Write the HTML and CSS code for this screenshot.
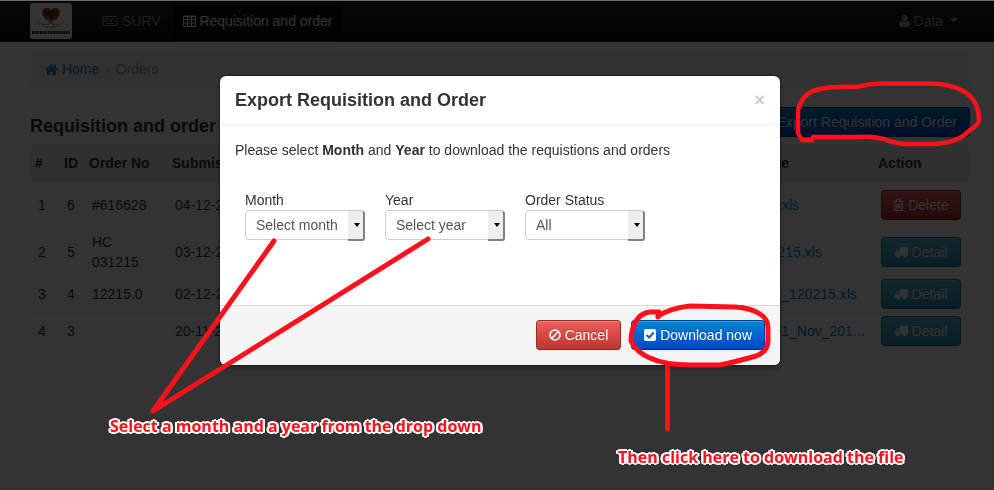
FILE: index.html
```html
<!DOCTYPE html>
<html lang="en">
<head>
<meta charset="utf-8">
<title>Requisition and order</title>
<link rel="stylesheet" href="styles.css">
</head>
<body>
<header class="navbar">
  <a class="brand" href="#" aria-label="Department of Health">
    <svg width="42" height="36" viewBox="0 0 42 36" aria-hidden="true">
      <rect width="42" height="36" rx="3" fill="#fff"/>
      <path d="M21 18C13 18 10 8 14 5.500Q18 4 21 7Q24 4 28 5.500C32 8 29 18 21 18Z" fill="#a54218"/>
      <path d="M15 7Q18 14 21 16Q24 14 27 7M18 6L21 15L24 6" fill="none" stroke="#521c0a" stroke-width="1.500"/>
      <path d="M17 13L20 14L21 20L24 14L26 13L24 18L20 21Z" fill="#a5732a"/>
      <path d="M7 18Q13 24 20 20Q28 24 35 18M11 22Q21 27 31 22M19 20L17 25M23 20L25 25" fill="none" stroke="#b5aa82" stroke-width="1"/>
      <path d="M2 29.500H40" stroke="#333" stroke-width="3" stroke-dasharray="2 .6"/>
    </svg>
  </a>
  <nav class="nav">
    <a class="nav-link" href="#"><svg class="icon" width="16" height="12" viewBox="0 0 16 12"><path d="M1 1.500H15V10.500H1Z" fill="none" stroke="currentColor"/><path d="M3 4H5M6 4H8M9 4H11M12 4H13M3 6H4M5 6H7M8 6H10M11 6H13M4 8.500H12" stroke="currentColor"/></svg> SURV</a>
    <a class="nav-link active" href="#"><svg class="icon" width="13" height="12" viewBox="0 0 13 12"><path d="M.5 1H12.500V11.500H.5ZM.5 4.500H12.500M.5 8H12.500M4.500 1V11.500M8.500 1V11.500M1 1.500H12" fill="none" stroke="currentColor"/></svg> Requisition and order</a>
  </nav>
  <a class="nav-link user" href="#"><svg class="icon" width="11" height="12" viewBox="0 0 11 12"><circle cx="5.500" cy="3" r="3" fill="currentColor"/><path d="M2.500 5.500Q5.500 8 8.500 5.500Q11 6 11 9.500Q11 12 9 12H2Q0 12 0 9.500Q0 6 2.500 5.500Z" fill="currentColor"/></svg> Data <span class="caret"></span></a>
</header>

<main class="container">
  <nav class="breadcrumb" aria-label="Breadcrumb">
    <a href="#"><svg class="icon" width="13" height="12" viewBox="0 0 13 12"><path d="M6.500 1L0 6.500L1 7.500L6.500 2.800L12 7.500L13 6.500L11 4.800V1.500H9V3.200Z" fill="currentColor"/><path d="M6.500 3.800L2 7.600V12H5.300V8.700H7.700V12H11V7.600Z" fill="currentColor"/></svg> Home</a>
    <span class="divider">»</span>
    <span class="current">Orders</span>
  </nav>
  <div class="heading">
    <h1>Requisition and order</h1>
    <button class="btn primary" type="button">Export Requisition and Order</button>
  </div>
  <table class="orders">
    <colgroup><col class="c-num"><col class="c-id"><col class="c-order"><col class="c-date"><col><col class="c-file"><col class="c-action"></colgroup>
    <thead>
      <tr><th>#</th><th>ID</th><th>Order No</th><th>Submission</th><th></th><th>Name</th><th>Action</th></tr>
    </thead>
    <tbody>
      <tr class="tall"><td>1</td><td>6</td><td>#616628</td><td>04-12-2015</td><td></td><td><a href="#">Site.xls</a></td><td><button class="btn danger" type="button"><svg class="icon" width="11" height="12" viewBox="0 0 11 12"><path d="M.5 2.500H10.500M3.500 2V.7H7.500V2M1.700 3V11.300H9.300V3M4 5V9.500M5.500 5V9.500M7 5V9.500" fill="none" stroke="currentColor" stroke-width="1.200"/></svg> Delete</button></td></tr>
      <tr class="tall"><td>2</td><td>5</td><td>HC 031215</td><td>03-12-2015</td><td></td><td><a href="#">031215.xls</a></td><td><button class="btn info" type="button"><svg class="icon" width="13" height="12" viewBox="0 0 13 12"><use href="#truck"/></svg> Detail</button></td></tr>
      <tr><td>3</td><td>4</td><td>12215.0</td><td>02-12-2015</td><td></td><td><a href="#">Kavi_120215.xls</a></td><td><button class="btn info" type="button"><svg class="icon" width="13" height="12" viewBox="0 0 13 12"><use href="#truck"/></svg> Detail</button></td></tr>
      <tr><td>4</td><td>3</td><td></td><td>20-11-2015</td><td></td><td><a href="#">Mob1_Nov_201...</a></td><td><button class="btn info" type="button"><svg class="icon" width="13" height="12" viewBox="0 0 13 12"><use href="#truck"/></svg> Detail</button></td></tr>
    </tbody>
  </table>
</main>

<div class="backdrop">
  <section class="modal" role="dialog" aria-labelledby="dialog-title">
    <div class="modal-header">
      <h2 id="dialog-title">Export Requisition and Order</h2>
      <button class="close" type="button" aria-label="Close">×</button>
    </div>
    <form class="modal-form">
      <div class="modal-body">
        <p>Please select <b>Month</b> and <b>Year</b> to download the requistions and orders</p>
        <div class="fields">
          <div class="field"><label for="month">Month</label><div class="select"><select id="month"><option>Select month</option></select></div></div>
          <div class="field"><label for="year">Year</label><div class="select"><select id="year"><option>Select year</option></select></div></div>
          <div class="field"><label for="status">Order Status</label><div class="select"><select id="status"><option>All</option></select></div></div>
        </div>
      </div>
      <div class="modal-footer">
        <button class="btn danger" type="button"><svg class="icon" width="12" height="12" viewBox="0 0 12 12"><circle cx="6" cy="6" r="5" fill="none" stroke="currentColor" stroke-width="1.600"/><path d="M2.500 9.500L9.500 2.500" stroke="currentColor" stroke-width="1.600"/></svg> Cancel</button>
        <button class="btn primary" type="button"><svg class="icon" width="12" height="12" viewBox="0 0 12 12"><rect width="12" height="12" rx="2" fill="currentColor"/><path d="M2.500 6L5.200 8.500L9.800 3.500" fill="none" stroke="#0a5fca" stroke-width="2"/></svg> Download now</button>
      </div>
    </form>
  </section>
</div>

<svg class="marks" width="994" height="490" viewBox="0 0 994 490" aria-hidden="true">
  <defs><g id="truck" fill="currentColor" stroke="none"><path fill-rule="evenodd" d="M5 1H13V9.500H5ZM4.500 3V9.500H0V6.500L2.500 3ZM1.200 6.300H3.500V4H2.800Z"/><circle cx="3" cy="9.800" r="1.700"/><circle cx="9.800" cy="9.800" r="1.700"/></g></defs>
  <path d="M274 241L153 411L428 239" stroke-width="5"/>
  <path d="M667.500 364V429" stroke-width="5"/>
  <path d="M813 137L812 140L802 140L798 133V110Q802 94 816 90Q832 86 857 87Q871 83 885 83.500H929Q957 84 970 96Q979 105 979 120Q979 125 970 130Q958 143 934 144H905Q892 143 884 139Q872 136 860 137H813" stroke-width="4.500"/>
  <path d="M658 317L659 312H650Q641 313 636 321Q631 330 631 341Q636 352 650 358Q665 365 690 365H720Q735 362 756 356Q767 352 768 342V328Q768 319 760 314Q751 308 735 307L690 306Q671 308 658 316" stroke-width="5"/>
</svg>
<p class="note note-left">Select a month and a year from the drop down</p>
<p class="note note-right">Then click here to download the file</p>
</body>
</html>
```
FILE: styles.css
```css
* { box-sizing: border-box; }
body {
  margin: 0;
  min-height: 100vh;
  background: #fff;
  color: #333;
  font: 14px/20px "Liberation Sans", Arial, sans-serif;
}
a { color: #08c; text-decoration: none; }
button, select { font: inherit; }
.icon { vertical-align: -1px; }

.navbar {
  display: flex;
  height: 42px;
  padding: 0 24px 0 30px;
  border-bottom: 1px solid #252525;
  background: linear-gradient(#222, #111);
}
.brand { margin: 3px 20px 0 0; height: 36px; }
.nav { display: flex; flex: 1; gap: 2px; }
.nav-link {
  display: block;
  padding: 11px 10px 10px;
  color: #999;
  white-space: nowrap;
}
.nav-link.active { background: #080808; color: #fff; }
.nav-link.user { border-left: 1px solid #111; padding: 11px 12px 10px 20px; }
.caret {
  display: inline-block;
  margin-left: 3px;
  border: 4px solid transparent;
  border-top-color: #999;
  border-bottom: 0;
  vertical-align: 4px;
}

.container { padding: 9px 24px 0 30px; }
.breadcrumb {
  padding: 8px 15px;
  border-radius: 4px;
  background: #f5f5f5;
}
.divider { padding: 0 1px; color: #ccc; font-size: 12px; }
.current { color: #999; }
.heading {
  display: flex;
  align-items: flex-start;
  justify-content: space-between;
  margin-top: 19px;
}
h1, h2 { margin: 0; font-size: 18px; line-height: 20px; font-weight: bold; }
.heading h1 { margin-top: 9px; }

.btn {
  height: 30px;
  padding: 4px 12px;
  border: 1px solid rgba(0, 0, 0, .15);
  border-bottom-color: rgba(0, 0, 0, .25);
  border-radius: 4px;
  color: #fff;
  line-height: 20px;
  white-space: nowrap;
  text-shadow: 0 -1px 0 rgba(0, 0, 0, .25);
  box-shadow: inset 0 1px 0 rgba(255, 255, 255, .2), 0 1px 2px rgba(0, 0, 0, .05);
}
.primary { background: linear-gradient(#08c, #04c) padding-box, #04b; }
.danger { background: linear-gradient(#ee5f5b, #bd362f) padding-box, #b6342e; }
.info { background: linear-gradient(#5bc0de, #2f96b4) padding-box, #2f90ad; }

.orders {
  width: 100%;
  margin-top: 8px;
  border-collapse: collapse;
  table-layout: fixed;
}
.c-num { width: 29px; }
.c-id { width: 25px; }
.c-order { width: 83px; }
.c-date { width: 100px; }
.c-file { width: 127px; }
.c-action { width: 97px; }
th {
  height: 36px;
  padding: 0 5px;
  background: #efefef;
  text-align: left;
  white-space: nowrap;
}
td {
  height: 37px;
  padding: 3px 8px;
  border-top: 1px solid #eee;
  white-space: nowrap;
}
td:nth-child(3) { white-space: normal; }
.tall td { height: 47px; }
.orders .btn { width: 80px; padding: 4px 0; }

.backdrop {
  position: fixed;
  inset: 0;
  padding: 75px 0 0 6px;
  border-top: 1px solid rgba(255, 255, 255, .4);
  background: rgba(0, 0, 0, .8);
}
.modal {
  width: 560px;
  max-width: 100%;
  margin: 0 auto;
  overflow: hidden;
  border-radius: 6px;
  background: #fff;
  box-shadow: 0 0 0 1px rgba(0, 0, 0, .3), 0 3px 7px rgba(0, 0, 0, .3);
}
.modal-header {
  display: flex;
  justify-content: space-between;
  padding: 14px 15px;
  border-bottom: 1px solid #eee;
}
.close {
  padding: 0;
  border: 0;
  background: none;
  color: #ccc;
  font-size: 18px;
  font-weight: bold;
  line-height: 18px;
}
.modal-body { padding: 15px; min-height: 180px; }
.modal-body p { margin: 0 0 30px; }
.fields { display: flex; gap: 20px; padding: 0 10px; }
.field { width: 120px; }
.field label { display: block; }
.select { position: relative; }
.select select {
  display: block;
  width: 100%;
  height: 30px;
  padding: 4px 10px;
  border: 1px solid #ccc;
  border-radius: 4px;
  appearance: none;
  background: #fff;
  color: #555;
}
.select::before {
  content: "";
  position: absolute;
  top: 1px;
  right: 0;
  width: 15px;
  height: 28px;
  border: solid #808080;
  border-width: 0 2px 2px 0;
  border-radius: 0 3px 3px 0;
  background: #eee;
  pointer-events: none;
}
.select::after {
  content: "";
  position: absolute;
  top: 13px;
  right: 5px;
  border: 3px solid transparent;
  border-top: 4px solid #000;
  border-bottom: 0;
  pointer-events: none;
}
.modal-footer {
  display: flex;
  justify-content: flex-end;
  gap: 10px;
  padding: 14px 15px 15px;
  border-top: 1px solid #ddd;
  background: #f5f5f5;
}

.marks {
  position: absolute;
  top: 0;
  left: 0;
  fill: none;
  stroke: #ff101c;
  stroke-linecap: round;
  stroke-linejoin: round;
}
.note {
  position: absolute;
  margin: 0;
  color: #ff101c;
  font: bold 16px/22px "Open Sans", "Noto Sans", sans-serif;
  white-space: nowrap;
  text-shadow:
    2px 0 #fff, -2px 0 #fff, 0 2px #fff, 0 -2px #fff,
    1px 1px #fff, -1px 1px #fff, 1px -1px #fff, -1px -1px #fff,
    2px 1px #fff, -2px 1px #fff, 2px -1px #fff, -2px -1px #fff;
}
.note-left { left: 110px; top: 415px; }
.note-right { left: 618px; top: 446px; }
```
